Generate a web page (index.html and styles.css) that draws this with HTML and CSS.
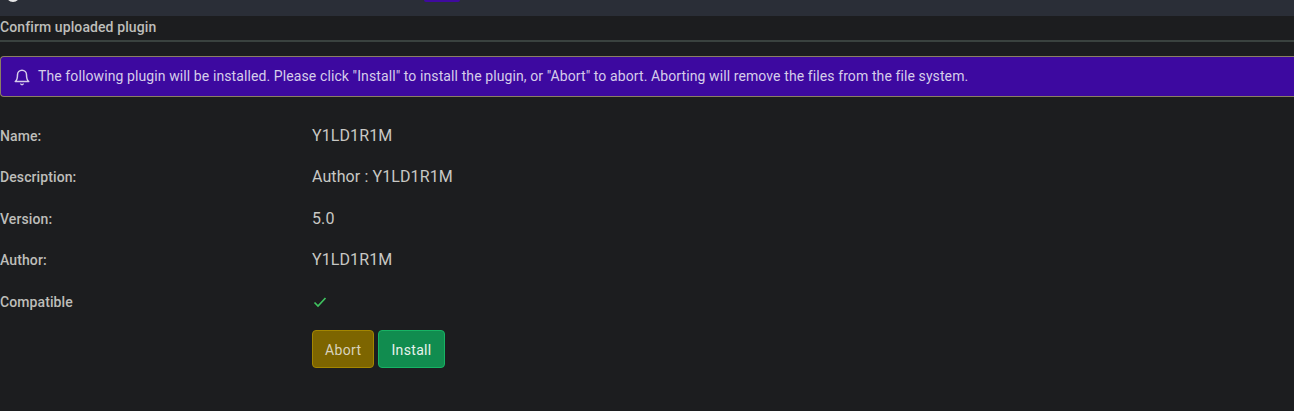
FILE: index.html
```html
<!DOCTYPE html>
<html lang="en">
<head>
  <meta charset="UTF-8">
  <title>Confirm uploaded plugin</title>
  <meta name="viewport" content="width=device-width, initial-scale=1.0">
  <link rel="stylesheet" href="styles.css">
</head>
<body>
  <!-- Top bar, cut off by the screenshot -->
  <div class="topbar">
    <span class="topbar-logo"></span>
    <span class="topbar-tab"></span>
  </div>

  <div class="page">
    <h1 class="page-title">Confirm uploaded plugin</h1>

    <div class="alert">
      <svg class="alert-icon" viewBox="0 0 24 24" fill="none" stroke="currentColor" stroke-width="2" stroke-linecap="round" stroke-linejoin="round">
        <path d="M6 9a6 6 0 0 1 12 0c0 7 3 9 3 9H3s3-2 3-9"/>
        <path d="M10.5 21.5a2 2 0 0 0 3 0"/>
      </svg>
      <span class="alert-text">The following plugin will be installed. Please click "Install" to install the plugin, or "Abort" to abort. Aborting will remove the files from the file system.</span>
    </div>

    <div class="details">
      <div class="row">
        <div class="row-label">Name:</div>
        <div class="row-value">Y1LD1R1M</div>
      </div>
      <div class="row">
        <div class="row-label">Description:</div>
        <div class="row-value">Author : Y1LD1R1M</div>
      </div>
      <div class="row">
        <div class="row-label">Version:</div>
        <div class="row-value">5.0</div>
      </div>
      <div class="row">
        <div class="row-label">Author:</div>
        <div class="row-value">Y1LD1R1M</div>
      </div>
      <div class="row">
        <div class="row-label">Compatible</div>
        <div class="row-value">
          <svg class="check" viewBox="0 0 16 16" fill="none" stroke="currentColor" stroke-width="1.7">
            <path d="M2.5 8.5l3.5 3.5 7.5-8"/>
          </svg>
        </div>
      </div>
    </div>

    <div class="actions">
      <button type="button" class="btn btn-abort">Abort</button>
      <button type="button" class="btn btn-install">Install</button>
    </div>
  </div>
</body>
</html>
```

FILE: styles.css
```css
body {
  margin: 0;
  background: #1c1d1f;
  color: #c8c8c4;
  font-family: "Roboto", "Liberation Sans", sans-serif;
  font-size: 14px;
  letter-spacing: 0.1px;
  overflow: hidden;
}
.topbar {
  height: 16px;
  background: #2a2e37;
  position: relative;
  overflow: hidden;
}
.topbar-logo {
  position: absolute;
  left: 6px;
  top: -12px;
  width: 14px;
  height: 14px;
  border-radius: 50%;
  background: #e8e8e8;
}
.topbar-tab {
  position: absolute;
  left: 424px;
  top: 0;
  width: 36px;
  height: 2px;
  background: #3f0a9e;
  border-radius: 0 0 3px 3px;
}
.page-title {
  margin: 0;
  height: 24px;
  line-height: 23px;
  font-size: 14px;
  font-weight: 500;
  color: #bebeba;
  border-bottom: 2px solid #3a423f;
}
.alert {
  margin-top: 14px;
  height: 39px;
  display: flex;
  align-items: center;
  gap: 7px;
  padding-left: 12px;
  background: #3d09a0;
  border: 1px solid #8b7f63;
  border-right: none;
  border-radius: 4px 0 0 4px;
  color: #d6cdea;
}
.alert-text {
  padding-bottom: 2px;
}
.alert-icon {
  width: 18px;
  height: 18px;
  flex: none;
}
.details {
  margin-top: 18px;
}
.row {
  display: grid;
  grid-template-columns: 312px 1fr;
  align-items: center;
  height: 41.5px;
}
.row-label {
  font-weight: 500;
  color: #bebeba;
}
.row-value {
  font-size: 16px;
  padding-bottom: 1px;
}
.check {
  display: block;
  width: 16px;
  height: 16px;
  margin-top: 2px;
  color: #3fc35f;
}
.actions {
  display: flex;
  gap: 4px;
  margin: 7px 0 0 312px;
}
.btn {
  height: 38px;
  padding: 2px 12px 0;
  border-radius: 4px;
  font-family: inherit;
  font-size: 14px;
  letter-spacing: 0.35px;
  cursor: pointer;
}
.btn-abort {
  background: #7d6500;
  border: 1px solid #a38600;
  color: #d8d2bd;
}
.btn-install {
  background: #118c4f;
  border: 1px solid #17b364;
  color: #e8f3ec;
}
```
